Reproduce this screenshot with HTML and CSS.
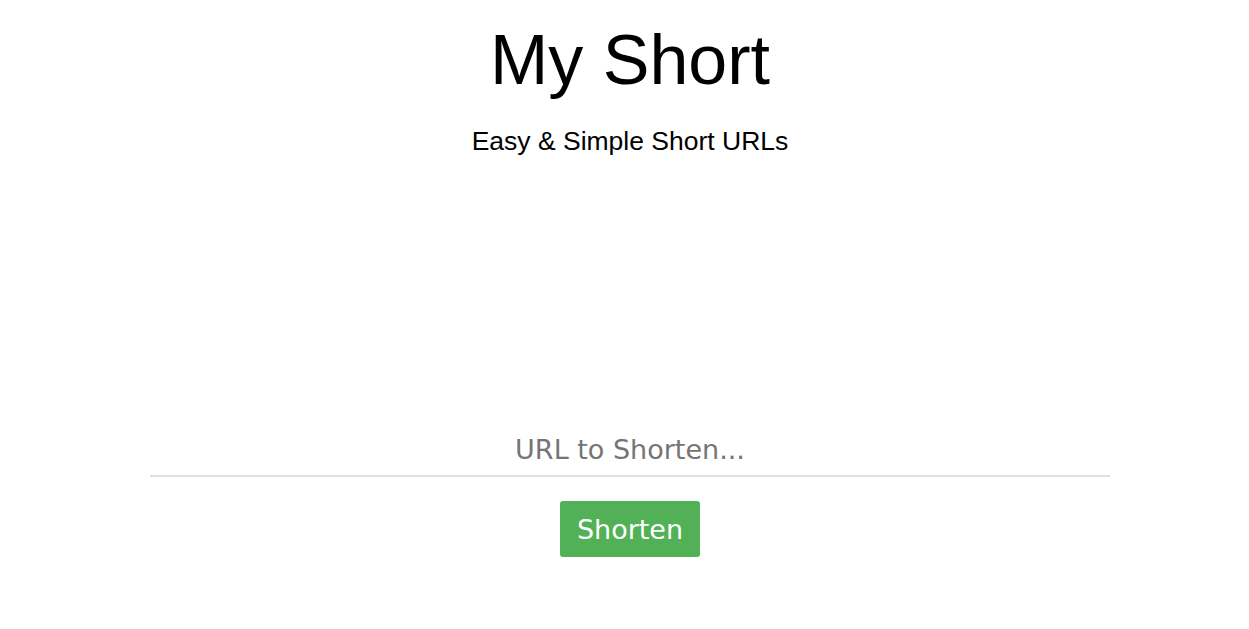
FILE: index.html
```html
<!DOCTYPE html>
<html lang="en">
<head>
    <meta charset="UTF-8">
    <meta name="viewport" content="width=device-width, initial-scale=1.0">
    <title>My Short</title>
    <link rel="stylesheet" href="styles.css">
</head>
<body>
    <div class="container">
        <h1>My Short</h1>
        <p class="tagline">Easy &amp; Simple Short URLs</p>

        <form class="shorten-form" onsubmit="return false;">
            <input type="text" class="url-input" name="url" placeholder="URL to Shorten...">
            <button type="submit" class="shorten-btn">Shorten</button>
        </form>
    </div>
</body>
</html>
```

FILE: styles.css
```css
body {
    margin: 8px 8px 8px 19px;
    font-family: "Liberation Sans", Arial, sans-serif;
    background-color: #fff;
    color: #000;
}
.container {
    max-width: 960px;
    margin: 0 auto;
    text-align: center;
}
h1 {
    font-size: 70px;
    font-weight: normal;
    margin: 12px 0 0;
}
.tagline {
    font-size: 26.5px;
    margin: 26px 0 0;
}
.shorten-form {
    display: flex;
    flex-direction: column;
    align-items: center;
    margin-top: 266px;
}
.url-input {
    box-sizing: border-box;
    width: 100%;
    padding: 11px 0 10px;
    border: none;
    border-bottom: 2px solid #e0e0e0;
    font-family: "DejaVu Sans", Verdana, sans-serif;
    font-size: 27px;
    text-align: center;
    color: #333;
    outline: none;
}
.url-input::placeholder {
    color: #757575;
}
.shorten-btn {
    margin-top: 24px;
    padding: 12.5px 17px;
    background-color: #52b157;
    color: #fff;
    border: none;
    border-radius: 3px;
    font-family: "DejaVu Sans", Verdana, sans-serif;
    font-size: 27px;
    cursor: pointer;
}
.shorten-btn:hover {
    background-color: #46a04b;
}
```
